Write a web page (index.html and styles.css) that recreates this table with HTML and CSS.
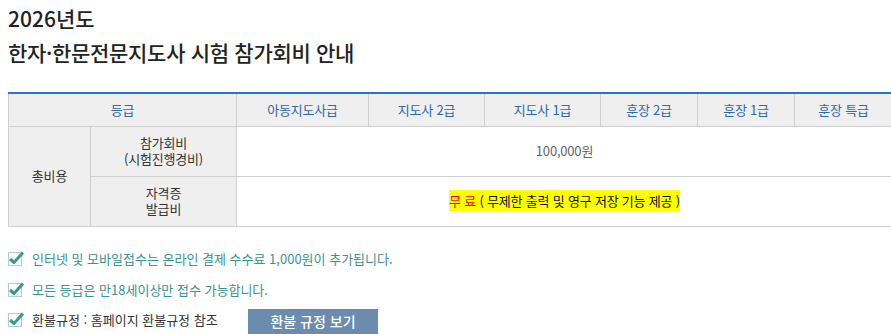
FILE: index.html
```html
<!DOCTYPE html>
<html lang="ko">
<head>
<meta charset="utf-8">
<link rel="stylesheet" href="styles.css">
</head>
<body>
<h1 class="year">2026년도</h1>
<h2 class="title">한자·한문전문지도사 시험 참가회비 안내</h2>
<table class="fee">
  <colgroup>
    <col class="c1"><col class="c2"><col class="c3"><col class="c4"><col class="c5"><col class="c6"><col class="c7"><col class="c8">
  </colgroup>
  <thead>
    <tr>
      <th colspan="2">등급</th>
      <th>아동지도사급</th>
      <th>지도사 2급</th>
      <th>지도사 1급</th>
      <th>훈장 2급</th>
      <th>훈장 1급</th>
      <th>훈장 특급</th>
    </tr>
  </thead>
  <tbody>
    <tr>
      <td class="label" rowspan="2">총비용</td>
      <td class="label">참가회비<br>(시험진행경비)</td>
      <td class="value" colspan="6">100,000원</td>
    </tr>
    <tr>
      <td class="label">자격증<br>발급비</td>
      <td class="value" colspan="6"><span class="hl"><span class="free">무 료</span> ( 무제한 출력 및 영구 저장 기능 제공 )</span></td>
    </tr>
  </tbody>
</table>
<ul class="notes">
  <li class="teal"><svg class="chk" viewBox="0 0 16 16" width="16" height="16"><rect x="0.5" y="2.5" width="13" height="13" fill="none" stroke="#a9d3cc"/><path d="M2 9 L6 12.5 L15 2.5" fill="none" stroke="#3a9a8a" stroke-width="3" stroke-linejoin="round"/></svg>인터넷 및 모바일접수는 온라인 결제 수수료 1,000원이 추가됩니다.</li>
  <li class="teal"><svg class="chk" viewBox="0 0 16 16" width="16" height="16"><rect x="0.5" y="2.5" width="13" height="13" fill="none" stroke="#a9d3cc"/><path d="M2 9 L6 12.5 L15 2.5" fill="none" stroke="#3a9a8a" stroke-width="3" stroke-linejoin="round"/></svg>모든 등급은 만18세이상만 접수 가능합니다.</li>
  <li class="dark"><svg class="chk" viewBox="0 0 16 16" width="16" height="16"><rect x="0.5" y="2.5" width="13" height="13" fill="none" stroke="#a9d3cc"/><path d="M2 9 L6 12.5 L15 2.5" fill="none" stroke="#3a9a8a" stroke-width="3" stroke-linejoin="round"/></svg><span class="refund">환불규정 : 홈페이지 환불규정 참조</span><a class="btn">환불 규정 보기</a></li>
</ul>
</body>
</html>
```
FILE: styles.css
```css
* { box-sizing: border-box; }
body {
  margin: 0 0 0 8px;
  font-family: "Noto Sans CJK KR", "Noto Sans", sans-serif;
  color: #222;
  overflow: hidden;
  width: 884px;
}
.year {
  margin: 0;
  padding-top: 4px;
  font-size: 21px;
  font-weight: 500;
  line-height: 28px;
  letter-spacing: 0;
}
.title {
  margin: 6px 0 0;
  font-size: 21px;
  font-weight: 500;
  line-height: 28px;
  letter-spacing: -0.3px;
}
.fee {
  margin-top: 26px;
  width: 884px;
  border-collapse: collapse;
  border-top: 2px solid #2b73c8;
  font-size: 13px;
  letter-spacing: -0.2px;
  table-layout: fixed;
}
.c1 { width: 82px; }
.c2 { width: 146px; }
.c3 { width: 132px; }
.c4 { width: 116px; }
.c5 { width: 116px; }
.c6 { width: 97px; }
.c7 { width: 97px; }
.c8 { width: 98px; }
.fee th, .fee td {
  border: 1px solid #cfcfcf;
  text-align: center;
  padding: 0;
}
.fee th {
  background: #efefef;
  color: #2e68ad;
  font-weight: 400;
  height: 33px;
  border-top: none;
}
.fee td { height: 50px; line-height: 16px; }
.fee td.label { background: #efefef; color: #333; }
.fee td.value { color: #666; background: #fff; }
.hl {
  background: #ffff00;
  color: #111;
  padding: 1px 0;
}
.free { color: #ff0000; }
.notes {
  list-style: none;
  margin: 16px 0 0;
  padding: 0;
  font-size: 13px;
  letter-spacing: 0;
}
.notes li {
  display: flex;
  align-items: center;
  height: 31px;
}
.notes li.dark { height: 29px; }
.chk { margin-right: 8px; flex: none; }
.teal { color: #3a9590; }
.dark { color: #333; }
.refund { width: 216px; }
.btn {
  display: inline-flex;
  align-items: center;
  justify-content: center;
  width: 130px;
  height: 25px;
  background: #6b8cae;
  color: #fff;
  font-size: 14px;
  font-weight: 500;
  margin-top: 4px;
}
```
